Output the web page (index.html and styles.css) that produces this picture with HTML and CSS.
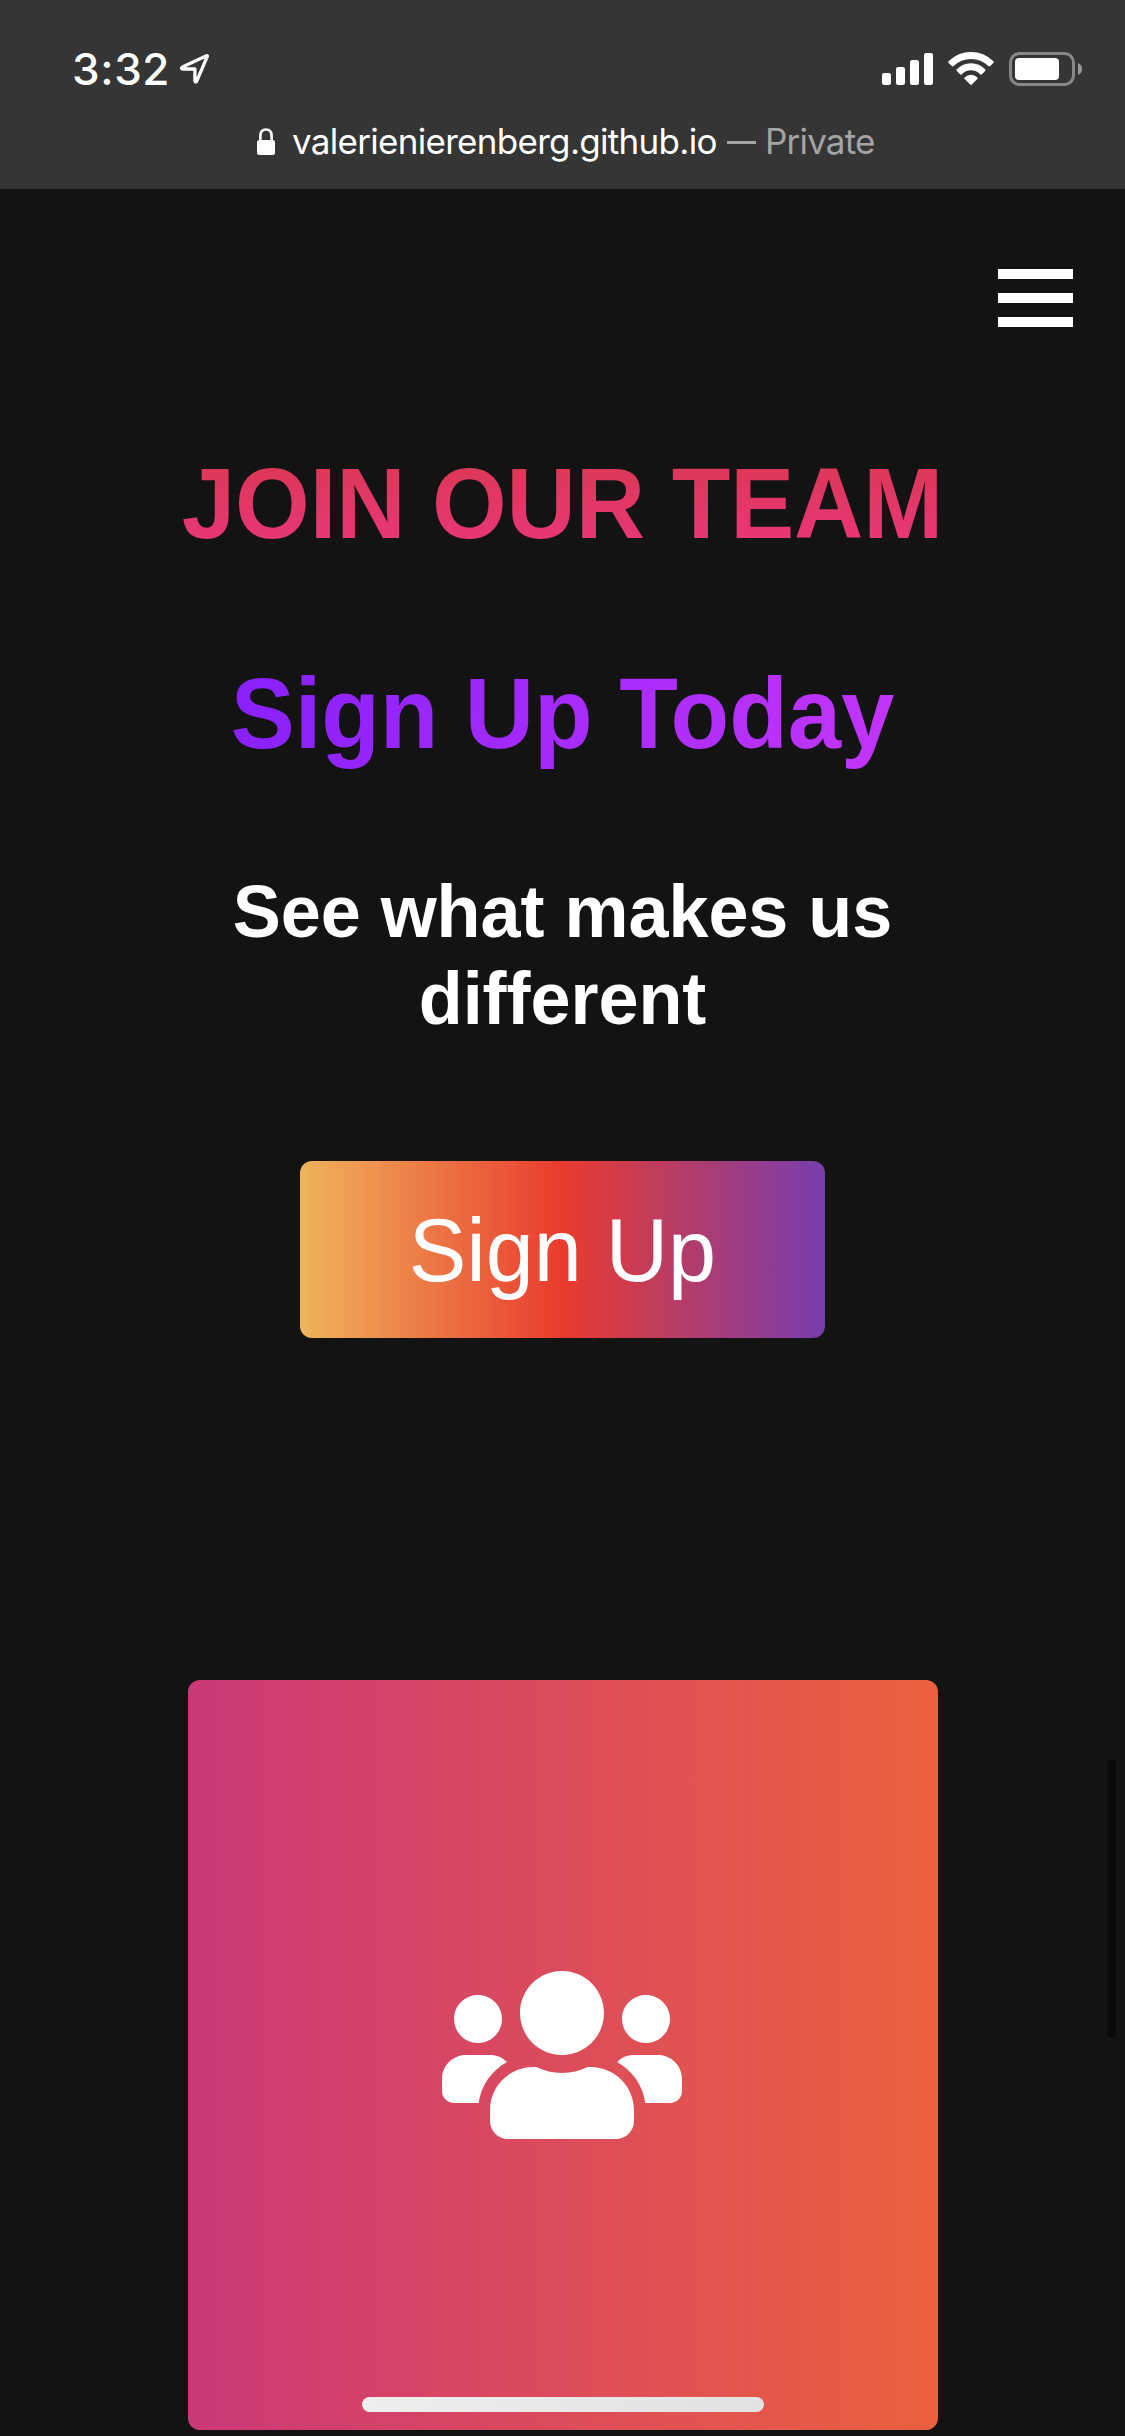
FILE: index.html
```html
<!DOCTYPE html>
<html lang="en">
<head>
<meta charset="utf-8">
<title>Join Our Team</title>
<link rel="stylesheet" href="styles.css">
</head>
<body>
<div class="phone">
  <header class="browser">
    <div class="status">
      <div class="clock">
        <span class="time">3:32</span>
        <svg class="location" viewBox="0 0 32 32" fill="none" stroke="#fff" stroke-width="3.3" stroke-linejoin="round"><path d="M28.3 3.3 17.6 28.3q-1 1.6-1.7-.4V16H4.2q-3-.4-.8-2L27 3q1.7-.6 1.3.3Z"/></svg>
      </div>
      <div class="indicators">
        <svg class="signal" viewBox="0 0 51 32" fill="#fff"><rect y="20" width="9" height="12" rx="2.2"/><rect x="14" y="14" width="9" height="18" rx="2.2"/><rect x="28" y="7" width="9" height="25" rx="2.2"/><rect x="42" width="9" height="32" rx="2.2"/></svg>
        <svg class="wifi" viewBox="0 0 46 33" fill="#fff"><path d="M.6 9.2Q10 0 23 0t22.4 9.2q.8.9 0 1.7l-3.2 3.2q-.9.8-1.8 0Q33 7 23 7T5.600 14.100q-.9.8-1.800 0L.6 10.900q-.8-.8 0-1.700Z"/><path d="M8.800 17.300Q14.500 11.300 23 11.300t14.200 6q.8.900 0 1.700l-3.300 3.200q-.8.800-1.800.1Q28.500 18.300 23 18.300t-9.100 4q-1 .700-1.800-.1L8.800 19q-.8-.800 0-1.700Z"/><path d="M16.700 25.400q2.400-2.600 6.300-2.600t6.300 2.600q.8.900 0 1.700l-5.500 5.500q-.8.700-1.600 0l-5.500-5.500q-.8-.800 0-1.700Z"/></svg>
        <svg class="battery" viewBox="0 0 74 34"><rect x="1.500" y="1.500" width="63" height="31" rx="9" fill="none" stroke="#878787" stroke-width="3"/><rect x="6" y="6" width="44" height="22" rx="4" fill="#fff"/><path d="M69 11q4 1.500 4 6t-4 6Z" fill="#9a9a9a"/></svg>
      </div>
    </div>
    <div class="address">
      <svg class="lock" viewBox="0 0 18 27"><rect y="12" width="18" height="15" rx="2.500" fill="#fff"/><path d="M3.400 13V8q0-6.500 5.600-6.500T14.600 8v5" fill="none" stroke="#fff" stroke-width="2.600"/></svg>
      <span class="domain">valerienierenberg.github.io</span>
      <span class="mode"><span class="dash"></span><span class="private">Private</span></span>
    </div>
  </header>
  <nav class="nav">
    <div class="menu"><span class="bar"></span><span class="bar"></span><span class="bar"></span></div>
  </nav>
  <main class="content">
    <h1 class="title">JOIN OUR TEAM</h1>
    <h2 class="subtitle">Sign Up Today</h2>
    <h3 class="lead">See what makes us<br>different</h3>
    <button class="signup"><span class="signup-label">Sign Up</span></button>
    <section class="card">
      <svg class="users" viewBox="0 0 640 512" fill="#fff"><path d="M96 224c35.300 0 64-28.700 64-64s-28.700-64-64-64-64 28.700-64 64 28.700 64 64 64zm448 0c35.300 0 64-28.700 64-64s-28.700-64-64-64-64 28.700-64 64 28.700 64 64 64zm32 32h-64c-17.600 0-33.500 7.100-45.100 18.600 40.300 22.100 68.900 62 75.100 109.400h66c17.700 0 32-14.300 32-32v-32c0-35.300-28.700-64-64-64zm-256 0c61.900 0 112-50.100 112-112S381.900 32 320 32 208 82.100 208 144s50.100 112 112 112zm76.800 32h-8.300c-20.800 10-43.900 16-68.500 16s-47.600-6-68.500-16h-8.300C179.600 288 128 339.600 128 403.200V432c0 26.500 21.500 48 48 48h288c26.500 0 48-21.500 48-48v-28.800c0-63.600-51.600-115.200-115.200-115.200zm-223.700-13.400C161.500 263.100 145.600 256 128 256H64c-35.300 0-64 28.700-64 64v32c0 17.700 14.300 32 32 32h65.900c6.300-47.400 34.900-87.300 75.200-109.400z"/></svg>
    </section>
  </main>
  <div class="scroll-thumb"></div>
  <div class="home-indicator"></div>
</div>
</body>
</html>
```
FILE: styles.css
```css
* { box-sizing: border-box; }

body {
  margin: 0;
  background: #131313;
}

.phone {
  position: relative;
  width: 1125px;
  height: 2436px;
  overflow: hidden;
  background: #131313;
  color: #fff;
  font-family: "Liberation Sans", Arial, sans-serif;
}

.browser {
  height: 189px;
  padding-top: 44px;
  background: #353535;
  font-family: Inter, sans-serif;
}

.status {
  display: flex;
  justify-content: space-between;
  height: 50px;
  padding: 0 42px 0 72px;
}

.clock { display: flex; }

.time {
  width: 107px;
  font-size: 44px;
  font-weight: 500;
  letter-spacing: 0.6px;
  line-height: 50px;
  white-space: nowrap;
}

.location {
  width: 32px;
  height: 32px;
  margin-top: 9px;
}

.indicators {
  display: flex;
  padding-top: 8px;
}

.signal { width: 51px; height: 32px; margin-top: 1px; }
.wifi { width: 46px; height: 33px; margin-left: 15px; }
.battery { width: 74px; height: 34px; margin-left: 15px; }

.address {
  display: flex;
  height: 50px;
  margin-top: 22px;
  padding-left: 257px;
  font-size: 35px;
  line-height: 50px;
  white-space: nowrap;
}

.lock { width: 18px; height: 27px; margin-top: 12px; }

.domain {
  width: 434px;
  margin-left: 17px;
  letter-spacing: -0.7px;
}

.mode {
  display: flex;
  align-items: center;
  color: #a4a4a4;
}

.dash {
  width: 29px;
  height: 3px;
  margin: 3px 9px 0 1px;
  background: #a4a4a4;
}

.private { letter-spacing: -0.8px; }

.nav {
  display: flex;
  justify-content: flex-end;
  height: 261px;
  padding: 80px 52px 0 0;
}

.menu {
  display: flex;
  flex-direction: column;
  gap: 14.5px;
  width: 75px;
}

.bar {
  height: 9.5px;
  background: #fff;
}

.content {
  display: flex;
  flex-direction: column;
  align-items: center;
}

.title,
.subtitle {
  margin: 0;
  font-size: 96px;
  line-height: 110px;
  letter-spacing: -0.1px;
  white-space: nowrap;
  color: transparent;
  -webkit-background-clip: text;
  background-clip: text;
  transform: scaleY(1.042);
  transform-origin: 50% 88px;
}

.title {
  background-image: linear-gradient(180deg, #dc3858 18%, #e83677 82%);
}

.subtitle {
  margin-top: 100px;
  background-image: linear-gradient(100deg, #8820fb, #c335fa);
}

.lead {
  margin: 101px 0 0;
  font-size: 72px;
  line-height: 83.5px;
  letter-spacing: -0.05px;
  text-align: center;
  transform: scaleY(1.042);
  transform-origin: 50% 67px;
}

.signup {
  width: 525px;
  height: 177px;
  margin: 123px 0 0;
  padding: 0;
  border: 0;
  border-radius: 12px;
  background: linear-gradient(90deg, #f0b45c, #e93b2e 50%, #783dae);
  color: #fff;
  font: 86.4px/177px "Liberation Sans", Arial, sans-serif;
}

.signup-label {
  display: block;
  padding-top: 2px;
  transform: scaleY(1.03);
  transform-origin: 50% 121px;
}

.card {
  display: flex;
  align-items: center;
  justify-content: center;
  width: 750px;
  height: 750px;
  margin-top: 342px;
  border-radius: 12px;
  background: linear-gradient(90deg, #cb3878, #ec603e);
}

.users { width: 240px; height: 192px; margin-right: 1px; }

.scroll-thumb {
  position: absolute;
  left: 1107px;
  top: 1759px;
  width: 9px;
  height: 279px;
  border-radius: 5px;
  background: #090909;
}

.home-indicator {
  position: absolute;
  left: 362px;
  top: 2397px;
  width: 402px;
  height: 15px;
  border-radius: 8px;
  background: linear-gradient(90deg, #eee, #e2e2e2);
}
```
